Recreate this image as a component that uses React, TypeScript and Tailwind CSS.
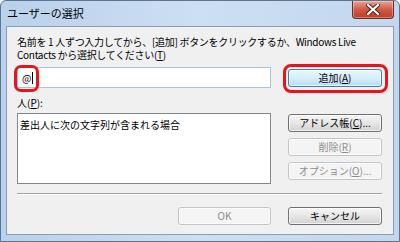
import type { ReactNode } from "react";

const font = "font-['Noto_Sans_CJK_JP','Noto_Sans',sans-serif]";

function Key({ children }: { children: ReactNode }) {
  return <span className="underline underline-offset-1">{children}</span>;
}

function WinButton({
  children,
  disabled,
  primary,
  className = "",
}: {
  children: ReactNode;
  disabled?: boolean;
  primary?: boolean;
  className?: string;
}) {
  let look =
    "border-[#707070] bg-gradient-to-b from-[#f6f6f6] via-[#e6e6e6] to-[#d2d2d2] text-black";
  if (primary)
    look =
      "border-[#3c7fb1] bg-gradient-to-b from-[#eaf6fd] via-[#d7effc] to-[#b4dcf3] text-black";
  if (disabled) look = "border-[#c2c5c8] bg-[#f4f4f4] text-[#8d8d8d]";
  return (
    <div
      className={`flex h-[18px] items-center justify-center rounded-[3px] border text-[10px] leading-none shadow-[inset_0_0_0_1px_rgba(255,255,255,0.7)] ${look} ${className}`}
    >
      {children}
    </div>
  );
}

export default function App() {
  return (
    <div
      className={`relative flex h-[242px] w-[400px] flex-col overflow-hidden rounded-t-[6px] border border-[#5c7590] bg-gradient-to-r from-[#b9d1ec] via-[#cddff2] to-[#c2d7ee] ${font}`}
    >
      {/* title bar */}
      <div className="flex h-[25px] items-start justify-between">
        <span className="pl-[6px] pt-[5px] text-[11px] leading-[14px] text-black">ユーザーの選択</span>
        <div className="mr-[5px] flex h-[18px] w-[42px] items-center justify-center rounded-b-[4px] border border-t-0 border-[#6b2b20] bg-gradient-to-b from-[#e8a493] via-[#cf5a43] to-[#c13a24] shadow-[inset_0_0_0_1px_rgba(255,255,255,0.35)]">
          <svg width="14" height="11" viewBox="0 0 14 11">
            <path d="M2 1 L12 10 M12 1 L2 10" stroke="#4a1d15" strokeWidth="4" strokeLinecap="square" />
            <path d="M2 1 L12 10 M12 1 L2 10" stroke="#ffffff" strokeWidth="2.2" strokeLinecap="square" />
          </svg>
        </div>
      </div>

      {/* client area */}
      <div className="mx-[5px] flex h-[209px] flex-col border border-[#8a9db3] bg-[#f0f0f0] pl-[10px] pr-[11px] pt-[8px] text-black">
        <p className="whitespace-nowrap text-[10px] leading-[13px] tracking-[-0.3px]">
          名前を 1 人ずつ入力してから、[追加] ボタンをクリックするか、Windows Live
          <br />
          Contacts から選択してください(<Key>T</Key>)
        </p>

        <div className="mt-[6px] flex items-center justify-between">
          <div className="flex h-[21px] w-[254px] items-center border border-[#a9c1da] bg-white pl-[4px] text-[10px]">
            @<span className="ml-[1px] h-[12px] w-px bg-black" />
          </div>
          <WinButton primary className="w-[94px]">
            追加(<Key>A</Key>)
          </WinButton>
        </div>

        <p className="mt-[9px] text-[10px] leading-[12px]">
          人(<Key>P</Key>):
        </p>

        <div className="mt-[4px] flex justify-between">
          <div className="h-[71px] w-[254px] border border-[#828790] bg-white px-[2px] pt-[5px] text-[10px] leading-[12px]">
            差出人に次の文字列が含まれる場合
          </div>
          <div className="flex w-[94px] flex-col gap-[6px] pt-[1px]">
            <WinButton>
              アドレス帳(<Key>C</Key>)...
            </WinButton>
            <WinButton disabled>
              削除(<Key>R</Key>)
            </WinButton>
            <WinButton disabled>
              オプション(<Key>O</Key>)...
            </WinButton>
          </div>
        </div>

        <div className="mt-[9px] h-[2px] border-t border-b border-t-[#a0a0a0] border-b-white" />

        <div className="mt-[12px] flex justify-end gap-[17px]">
          <WinButton disabled className="w-[93px]">
            OK
          </WinButton>
          <WinButton className="w-[94px]">キャンセル</WinButton>
        </div>
      </div>

      {/* red annotation marks */}
      <div className="absolute left-[13px] top-[64px] h-[27px] w-[25px] rounded-[7px] border-[3px] border-[#e8141c]" />
      <div className="absolute left-[282px] top-[63px] h-[29px] w-[105px] rounded-[8px] border-[3px] border-[#e8141c]" />
    </div>
  );
}
